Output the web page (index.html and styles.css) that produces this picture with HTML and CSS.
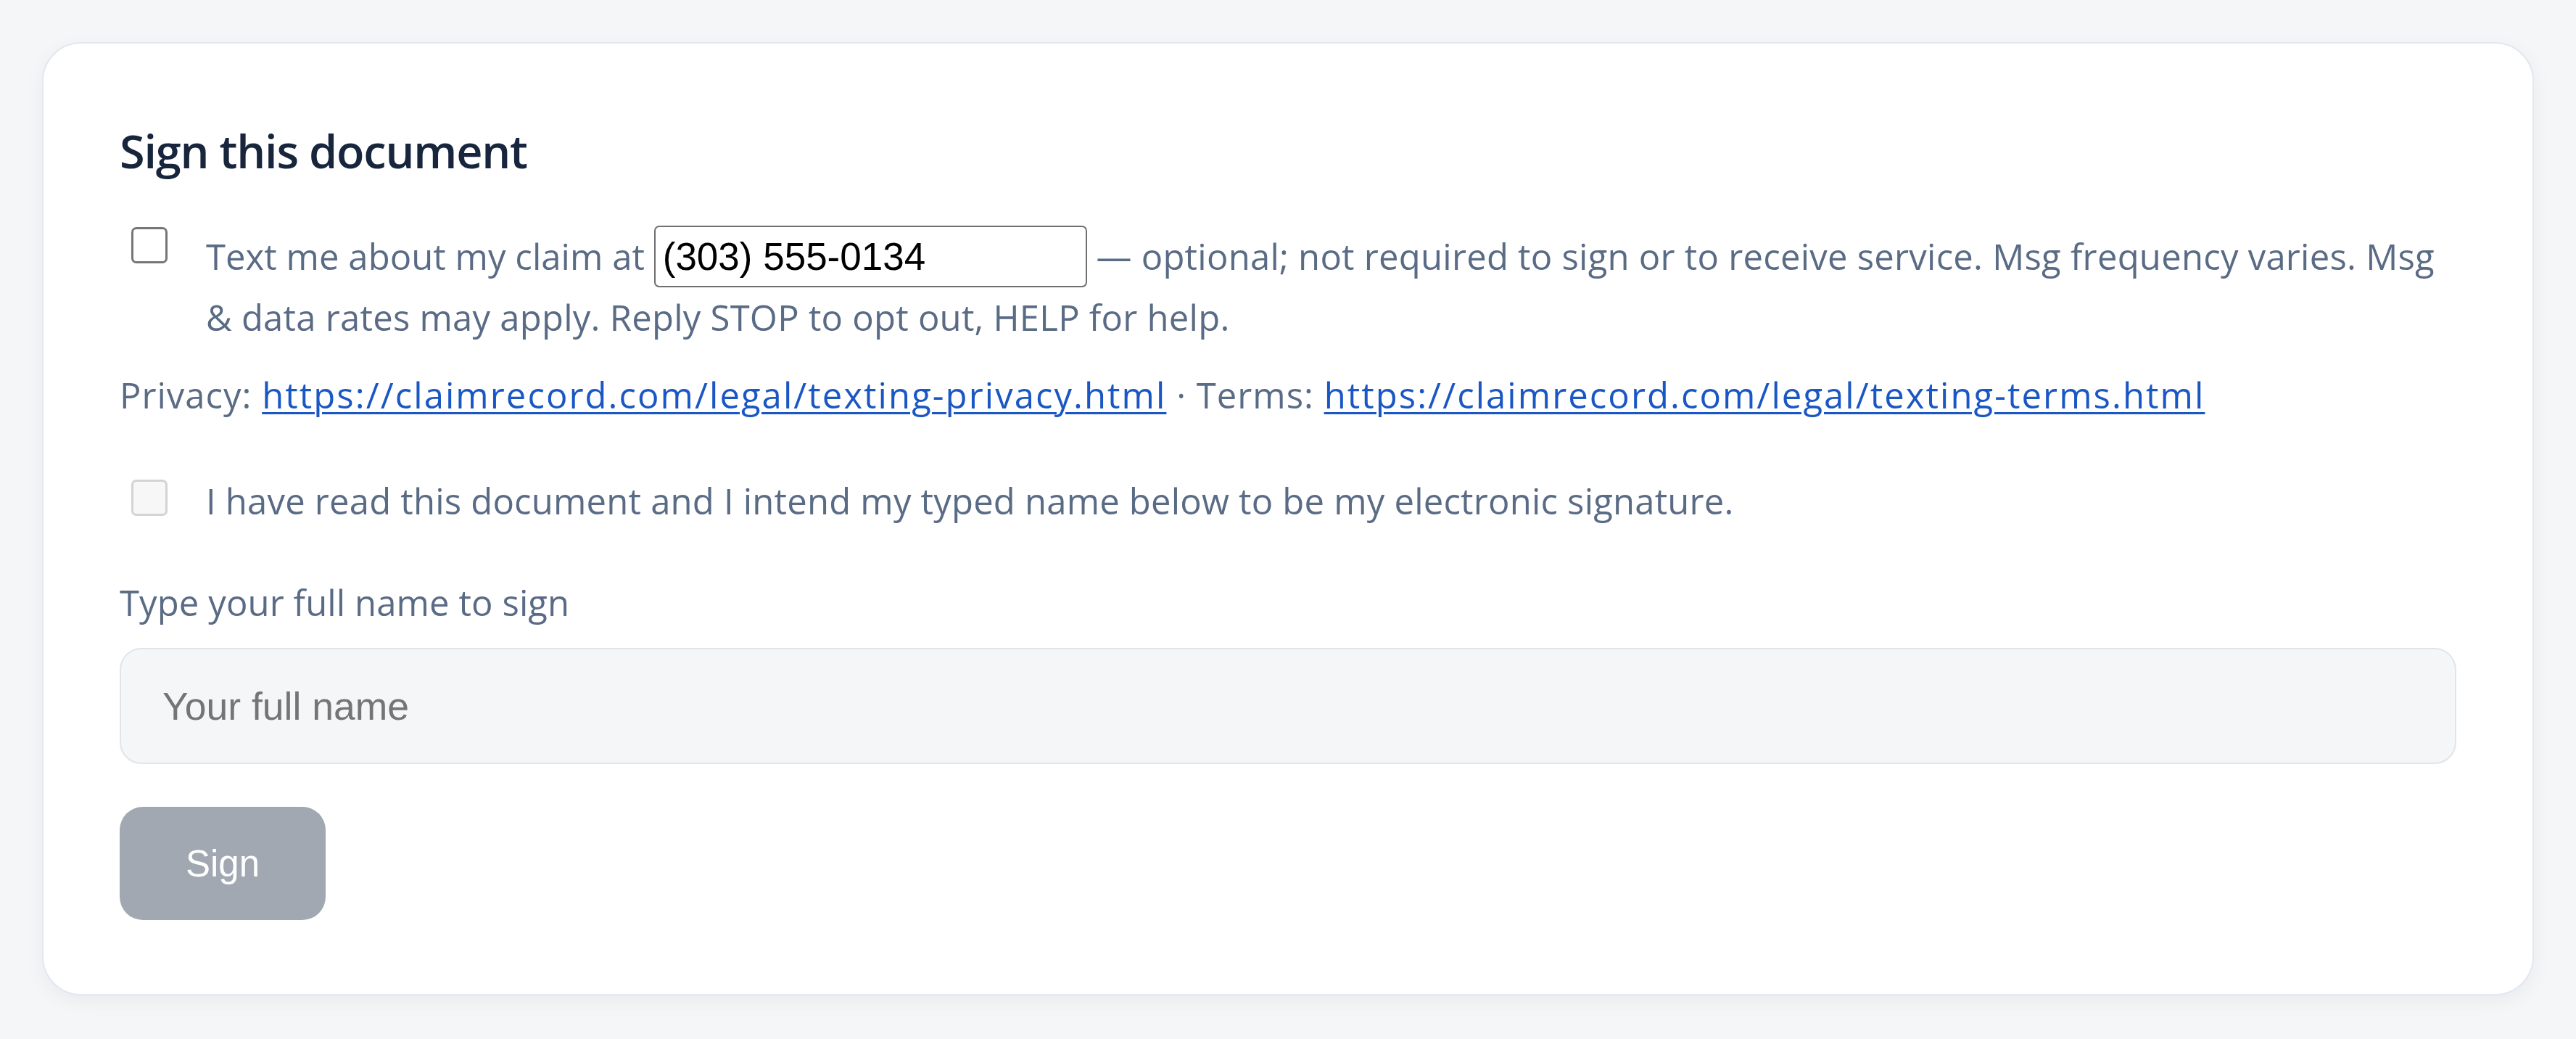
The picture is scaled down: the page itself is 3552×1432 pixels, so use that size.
FILE: index.html
```html
<!DOCTYPE html>
<html lang="en">
<head>
<meta charset="utf-8">
<title>Sign this document</title>
<link rel="stylesheet" href="styles.css">
</head>
<body>
<main class="page">
  <section class="card">
    <h2 class="card-title">Sign this document</h2>
    <label class="check-row sms-row">
      <input type="checkbox" class="box">
      <span class="check-text"><span class="lead">Text me about my claim at</span> <input type="tel" class="phone" value="(303) 555-0134"> <span class="tail">— optional; not required to sign or to receive service. Msg frequency varies. Msg </span><span class="tail">&amp; data rates may apply. Reply STOP to opt out, HELP for help.</span></span>
    </label>
    <p class="legal">Privacy: <a href="#">https://claimrecord.com/legal/texting-privacy.html</a> · Terms: <a href="#">https://claimrecord.com/legal/texting-terms.html</a></p>
    <label class="check-row consent-row">
      <input type="checkbox" class="box" disabled>
      <span class="check-text">I have read this document and I intend my typed name below to be my electronic signature.</span>
    </label>
    <label class="field-label" for="fullname">Type your full name to sign</label>
    <input id="fullname" type="text" class="name-input" placeholder="Your full name">
    <div class="actions">
      <button type="button" class="sign-btn" disabled>Sign</button>
    </div>
  </section>
</main>
</body>
</html>
```
FILE: styles.css
```css
* {
  box-sizing: border-box;
}

html, body {
  margin: 0;
  padding: 0;
}

body {
  background: #f4f6f8;
  font-family: "Open Sans", "Noto Sans", sans-serif;
  color: #5a6b85;
}

.page {
  padding: 58px;
}

.card {
  display: flex;
  flex-direction: column;
  align-items: stretch;
  background: #ffffff;
  border: 2px solid #e2e8f0;
  border-radius: 54px;
  padding: 105px 105px 102px;
  box-shadow: 0 8px 28px rgba(15, 23, 42, 0.05);
}

.card-title {
  margin: 0;
  font-size: 63px;
  line-height: 86px;
  font-weight: 600;
  color: #17253d;
  letter-spacing: -1.2px;
}

.check-row {
  display: flex;
  align-items: flex-start;
  gap: 53px;
  font-size: 49px;
  line-height: 83px;
}

.sms-row {
  margin-top: 60px;
}

.consent-row {
  margin-top: 63px;
}

.box {
  appearance: none;
  -webkit-appearance: none;
  flex: none;
  width: 50px;
  height: 50px;
  margin: 2px 0 0 16px;
  border: 3px solid #767676;
  border-radius: 7px;
  background: #ffffff;
}

.box:disabled {
  border-color: #d3d3d3;
  background: #f7f7f7;
}

.consent-row .box {
  margin-top: 12px;
}

.check-text {
  flex: 1;
  min-width: 0;
}

.sms-row .lead {
  letter-spacing: 0.05px;
}

.sms-row .tail {
  letter-spacing: 0.24px;
}

.consent-row .check-text {
  letter-spacing: 0.2px;
}

.phone {
  width: 597px;
  height: 85px;
  padding: 0 10px;
  border: 2.5px solid #6f6f6f;
  border-radius: 7px;
  font-family: "Liberation Sans", Arial, sans-serif;
  font-size: 53px;
  letter-spacing: 0;
  color: #000000;
  background: #ffffff;
  vertical-align: baseline;
}

.legal {
  margin: 24px 0 0;
  font-size: 49px;
  line-height: 83px;
  letter-spacing: 1px;
}

.legal a {
  color: #1a57c4;
  letter-spacing: 2.05px;
  text-decoration: underline;
  text-decoration-thickness: 3px;
  text-underline-offset: 5px;
}

.field-label {
  margin-top: 57px;
  font-size: 49px;
  line-height: 83px;
  letter-spacing: 0.1px;
}

.name-input {
  margin-top: 21px;
  width: 100%;
  height: 160px;
  padding: 0 57px;
  border: 2px solid #e0e5ec;
  border-radius: 30px;
  background: #f4f6f8;
  font-family: "Liberation Sans", Arial, sans-serif;
  font-size: 53.5px;
  color: #1f2937;
  outline: none;
}

.name-input::placeholder {
  color: #757575;
}

.actions {
  margin-top: 59px;
  display: flex;
}

.sign-btn {
  width: 284px;
  height: 156px;
  border: none;
  border-radius: 32px;
  background: #a2a8b2;
  color: #ffffff;
  font-family: "Liberation Sans", Arial, sans-serif;
  font-size: 51px;
  padding: 0;
}
```
